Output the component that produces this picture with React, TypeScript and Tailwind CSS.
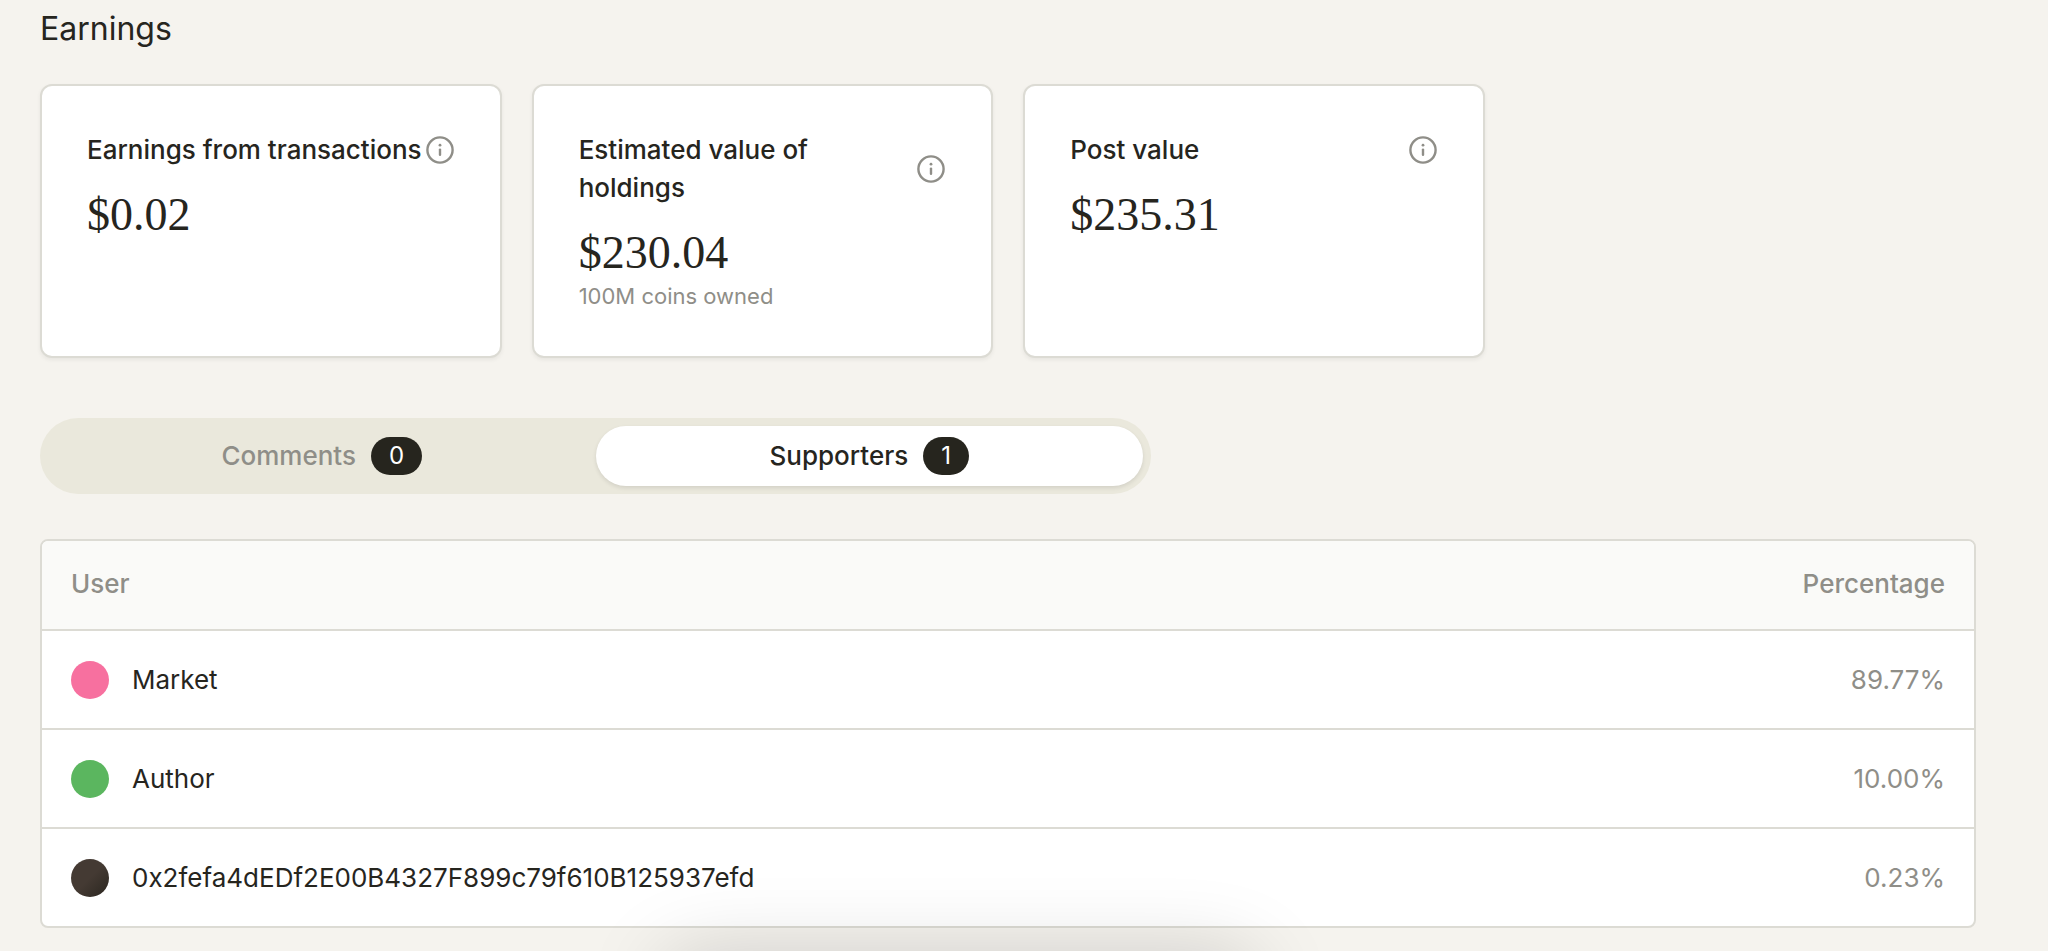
import { useState } from "react";

const earnings = [
  { title: "Earnings from transactions", value: "$0.02" },
  { title: "Estimated value of holdings", value: "$230.04", note: "100M coins owned" },
  { title: "Post value", value: "$235.31" },
];

const supporters = [
  { name: "Market", share: "89.77%", avatar: "bg-[#f7709f]" },
  { name: "Author", share: "10.00%", avatar: "bg-[#5bb65f]" },
  {
    name: "0x2fefa4dEDf2E00B4327F899c79f610B125937efd",
    share: "0.23%",
    avatar: "bg-linear-to-br from-[#443a33] from-50% to-[#2b2620]",
  },
];

const tabs = [
  { label: "Comments", count: 0 },
  { label: "Supporters", count: 1 },
];

function InfoIcon() {
  return (
    <svg viewBox="0 0 30 30" className="size-[30px]" fill="none" aria-hidden="true">
      <circle cx="15" cy="15" r="12.6" stroke="currentColor" strokeWidth="2.4" />
      <path d="M15 14.6v5.2" stroke="currentColor" strokeWidth="2.4" strokeLinecap="round" />
      <circle cx="15" cy="10.2" r="1.4" fill="currentColor" />
    </svg>
  );
}

export default function App() {
  const [active, setActive] = useState("Supporters");

  return (
    <main className="min-h-screen overflow-hidden bg-[#f5f3ee] pt-2 pr-18 pb-5 pl-10 font-['Inter',sans-serif] text-[26px] leading-[38px] text-[#26251e]">
      <h1 className="text-[32px] leading-[42px]">Earnings</h1>

      <section className="mt-[34px] grid max-w-[1445px] grid-cols-3 gap-[30px]">
        {earnings.map((card) => (
          <article
            key={card.title}
            className="rounded-xl border-2 border-[#dcdbd4] bg-white px-[45px] pt-[45px] pb-[46px] shadow-[0_2px_4px_rgba(0,0,0,0.06)]"
          >
            <header className="flex items-center justify-between">
              <h2 className="font-medium">{card.title}</h2>
              <button type="button" aria-label={card.title} className="shrink-0 text-[#8f8e88]">
                <InfoIcon />
              </button>
            </header>
            <p className="mt-[17px] font-['Liberation_Serif',serif] text-[46px] leading-[58px]">
              {card.value}
            </p>
            {card.note && <p className="text-[22px] leading-7 text-[#8f8e88]">{card.note}</p>}
          </article>
        ))}
      </section>

      <div
        role="tablist"
        className="mt-15 grid max-w-[1111px] grid-cols-2 rounded-full bg-[#eae8dc] p-2"
      >
        {tabs.map((tab) => (
          <button
            key={tab.label}
            type="button"
            role="tab"
            aria-selected={active === tab.label}
            onClick={() => setActive(tab.label)}
            className={
              active === tab.label
                ? "flex items-center justify-center gap-[15px] rounded-full bg-white py-[11px] font-medium shadow-[0_2px_4px_rgba(0,0,0,0.1)]"
                : "flex items-center justify-center gap-[15px] rounded-full py-[11px] font-medium text-[#8f8e88]"
            }
          >
            {tab.label}
            <span className="rounded-full bg-[#26251e] px-[18px] text-[24px] font-normal text-white">
              {tab.count}
            </span>
          </button>
        ))}
      </div>

      <div className="mt-[45px] overflow-hidden rounded-lg border-2 border-[#dcdbd4] bg-white">
        <table className="w-full">
          <thead className="bg-[#fafaf8] text-[#8f8e88]">
            <tr>
              <th scope="col" className="px-[29px] pt-6 pb-[26px] text-left font-medium">
                User
              </th>
              <th scope="col" className="px-[29px] pt-6 pb-[26px] text-right font-medium">
                Percentage
              </th>
            </tr>
          </thead>
          <tbody>
            {supporters.map((row) => (
              <tr key={row.name} className="border-t-2 border-[#dcdbd4]">
                <td className="px-[29px] pt-[30px] pb-[29px]">
                  <div className="flex items-center gap-[23px]">
                    <span className={`size-[38px] rounded-full ${row.avatar}`} />
                    {row.name}
                  </div>
                </td>
                <td className="px-[29px] pt-[30px] pb-[29px] text-right text-[#8f8e88]">
                  {row.share}
                </td>
              </tr>
            ))}
          </tbody>
        </table>
      </div>

      <div className="pointer-events-none fixed top-full left-1/2 h-20 w-[600px] -translate-x-[364px] rounded-full shadow-[0_4px_80px_rgba(0,0,0,0.17)]" />
    </main>
  );
}
